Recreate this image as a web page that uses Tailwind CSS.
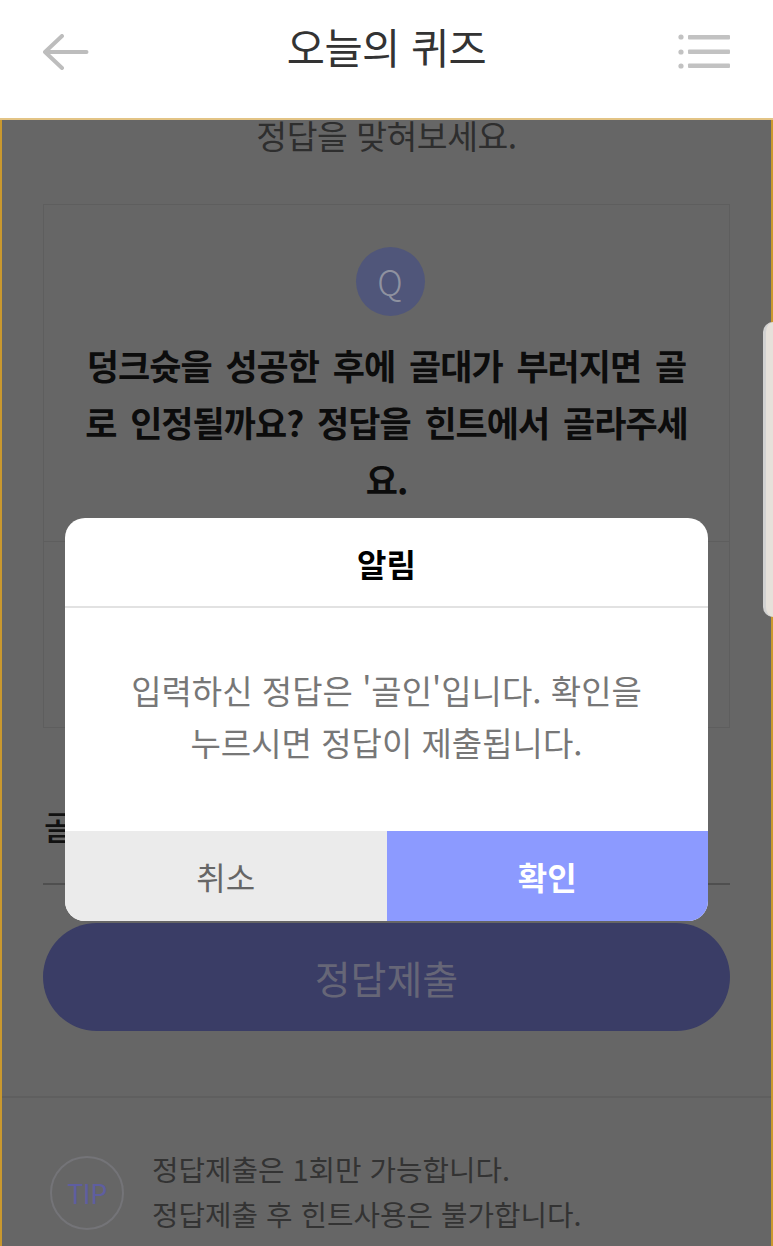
<!DOCTYPE html>
<html lang="ko">
<head>
<meta charset="utf-8">
<script src="https://cdn.jsdelivr.net/npm/@tailwindcss/browser@4"></script>
</head>
<body class="m-0">
<div class="relative w-[773px] h-[1246px] overflow-hidden bg-[#666666] font-['Noto_Sans_CJK_KR','Noto_Sans',sans-serif]">
  <header class="h-[120px] bg-white border-b-2 border-[#e3c486] flex items-center justify-between pl-[43px] pr-[43px] pb-[14px]">
    <svg class="w-[46px] h-[36px]" viewBox="0 0 46 36" fill="none" stroke="#bdbdbd" stroke-width="4" stroke-linecap="round" stroke-linejoin="round"><path d="M43.5 18H2M19 2 2 18l17 16"/></svg>
    <h1 class="ml-[6px] text-[41.5px] leading-[50px] font-normal text-[#333333] -mt-[12px] tracking-[-0.5px]">오늘의 퀴즈</h1>
    <svg class="w-[52px] h-[36px]" viewBox="0 0 52 36" fill="#c2c2c2"><circle cx="3" cy="3" r="2.6"/><circle cx="3" cy="18" r="2.6"/><circle cx="3" cy="32" r="2.6"/><rect x="10" y="1" width="42" height="4.5" rx="1"/><rect x="10" y="15.5" width="42" height="4.5" rx="1"/><rect x="10" y="29.5" width="42" height="4.5" rx="1"/></svg>
  </header>
  <main class="h-[1126px] border-x-2 border-[#c9982e] flex flex-col px-[41px]">
    <p class="text-center text-[33.5px] leading-[30px] text-[#2e2e2e] tracking-[-0.5px]">정답을 맞혀보세요.</p>
    <section class="mt-[54px] h-[524px] border border-[#5e5e5e] flex flex-col">
      <div class="h-[337px] border-b border-[#5e5e5e] flex flex-col items-center pt-[42px]">
        <div class="w-[69px] h-[69px] rounded-full bg-[#50567a] flex items-center justify-center text-[35px] font-light text-[#8f92a0] ml-[7px]">Q</div>
        <p class="mt-[20px] w-[615px] text-center text-[35px] leading-[57px] font-bold text-[#0c0c0c] break-all tracking-[-1px] [word-spacing:5px]">덩크슛을 성공한 후에 골대가 부러지면 골로 인정될까요? 정답을 힌트에서 골라주세요.</p>
      </div>
    </section>
    <div class="h-[157px] border-b-2 border-[#4f4f4f] pt-[75px] pl-[1px] text-[33px] leading-[46px] font-medium text-[#111111]">골인</div>
    <button class="mt-[38px] h-[108px] rounded-full bg-[#3a3d66] text-[39px] text-[#666677]">정답제출</button>
  </main>
  <div class="absolute left-[2px] right-[2px] top-[1096px] border-t-2 border-[#5f5f5f]"></div>
  <div class="absolute left-[50px] top-[1156px] w-[74px] h-[74px] rounded-full border-2 border-[#747478] flex items-center justify-center text-[27px] text-[#5e5ea0] tracking-[-0.5px]">TIP</div>
  <div class="absolute left-[152px] top-[1146px] text-[28.8px] leading-[45px] text-[#333333]">
    <p>정답제출은 1회만 가능합니다.</p>
    <p>정답제출 후 힌트사용은 불가합니다.</p>
  </div>
  <div class="absolute right-0 top-[322px] w-[10px] h-[295px] rounded-l-[10px] bg-[#e6e1da] border-l-[3px] border-[#d2d2d2]"></div>
  <div class="absolute left-[65px] top-[518px] w-[643px] h-[403px] rounded-[20px] overflow-hidden bg-white flex flex-col">
    <div class="h-[90px] border-b-2 border-[#e2e2e2] flex items-center justify-center pt-[2px] text-[32px] font-bold text-black">알림</div>
    <div class="h-[223px] flex flex-col items-center justify-center pt-[2px] pb-[10px] text-[33px] leading-[52px] text-[#777777] text-center">
      <p>입력하신 정답은 '골인'입니다. 확인을</p>
      <p>누르시면 정답이 제출됩니다.</p>
    </div>
    <div class="flex-1 grid grid-cols-2">
      <button class="bg-[#ebebeb] text-[32px] text-[#666666]">취소</button>
      <button class="bg-[#8c9aff] text-[32px] font-bold text-white">확인</button>
    </div>
  </div>
</div>
</body>
</html>
